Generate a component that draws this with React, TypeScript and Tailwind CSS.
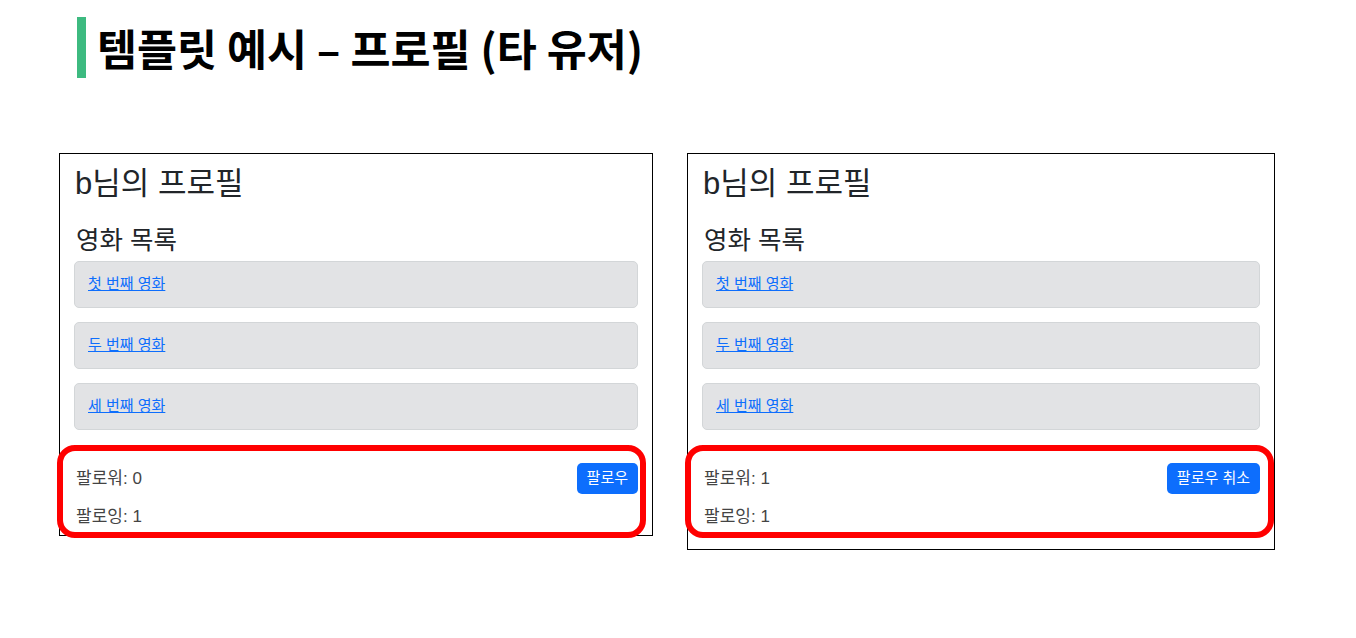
const movies = ["첫 번째 영화", "두 번째 영화", "세 번째 영화"];

function ProfileCard({
  followers,
  following,
  buttonLabel,
  className,
}: {
  followers: number;
  following: number;
  buttonLabel: string;
  className: string;
}) {
  return (
    <div className={`relative flex flex-col border border-black px-[14px] text-[#212529] ${className}`}>
      <h2 className="mt-[10px] pl-[1px] text-[31px] leading-[40px]">b님의 프로필</h2>
      <h4 className="mt-[19px] pl-[2px] text-[25.5px] leading-[34px]">영화 목록</h4>
      <div className="mt-[4px] flex flex-col gap-[14px]">
        {movies.map((m) => (
          <div
            key={m}
            className="flex h-[47px] items-center rounded-[5px] border border-[#d3d6d8] bg-[#e2e3e5] px-[13px]"
          >
            <a href="#" className="text-[15px] text-[#0d6efd] underline">
              {m}
            </a>
          </div>
        ))}
      </div>
      <div className="mt-[33px] flex items-center justify-between">
        <span className="pl-[2px] text-[17px] text-[#444]">팔로워: {followers}</span>
        <button className="h-[31px] rounded-[5px] bg-[#0d6efd] px-[10px] text-[15px] text-white">
          {buttonLabel}
        </button>
      </div>
      <div className="mt-[11px] pl-[2px] text-[17px] leading-[24px] text-[#444]">팔로잉: {following}</div>
      <div className="pointer-events-none absolute left-[-3px] top-[291px] h-[93px] w-[589px] rounded-[18px] border-[6px] border-[#ff0000]" />
    </div>
  );
}

export default function App() {
  return (
    <div
      className="h-[638px] w-[1356px] overflow-hidden bg-white"
      style={{ fontFamily: '"Liberation Sans", "Noto Sans CJK KR", sans-serif' }}
    >
      <div className="flex items-center pl-[77px] pt-[17px]">
        <div className="h-[61px] w-[9px] bg-[#3dba80]" />
        <h1
          className="ml-[11px] text-[43.5px] font-bold leading-[61px] text-black"
          style={{ fontFamily: '"Noto Sans CJK KR", sans-serif' }}
        >
          템플릿 예시 – 프로필 (타 유저)
        </h1>
      </div>
      <div className="mt-[75px] flex items-start gap-[34px] pl-[59px]">
        <ProfileCard followers={0} following={1} buttonLabel="팔로우" className="h-[383px] w-[594px]" />
        <ProfileCard followers={1} following={1} buttonLabel="팔로우 취소" className="h-[397px] w-[588px]" />
      </div>
    </div>
  );
}
